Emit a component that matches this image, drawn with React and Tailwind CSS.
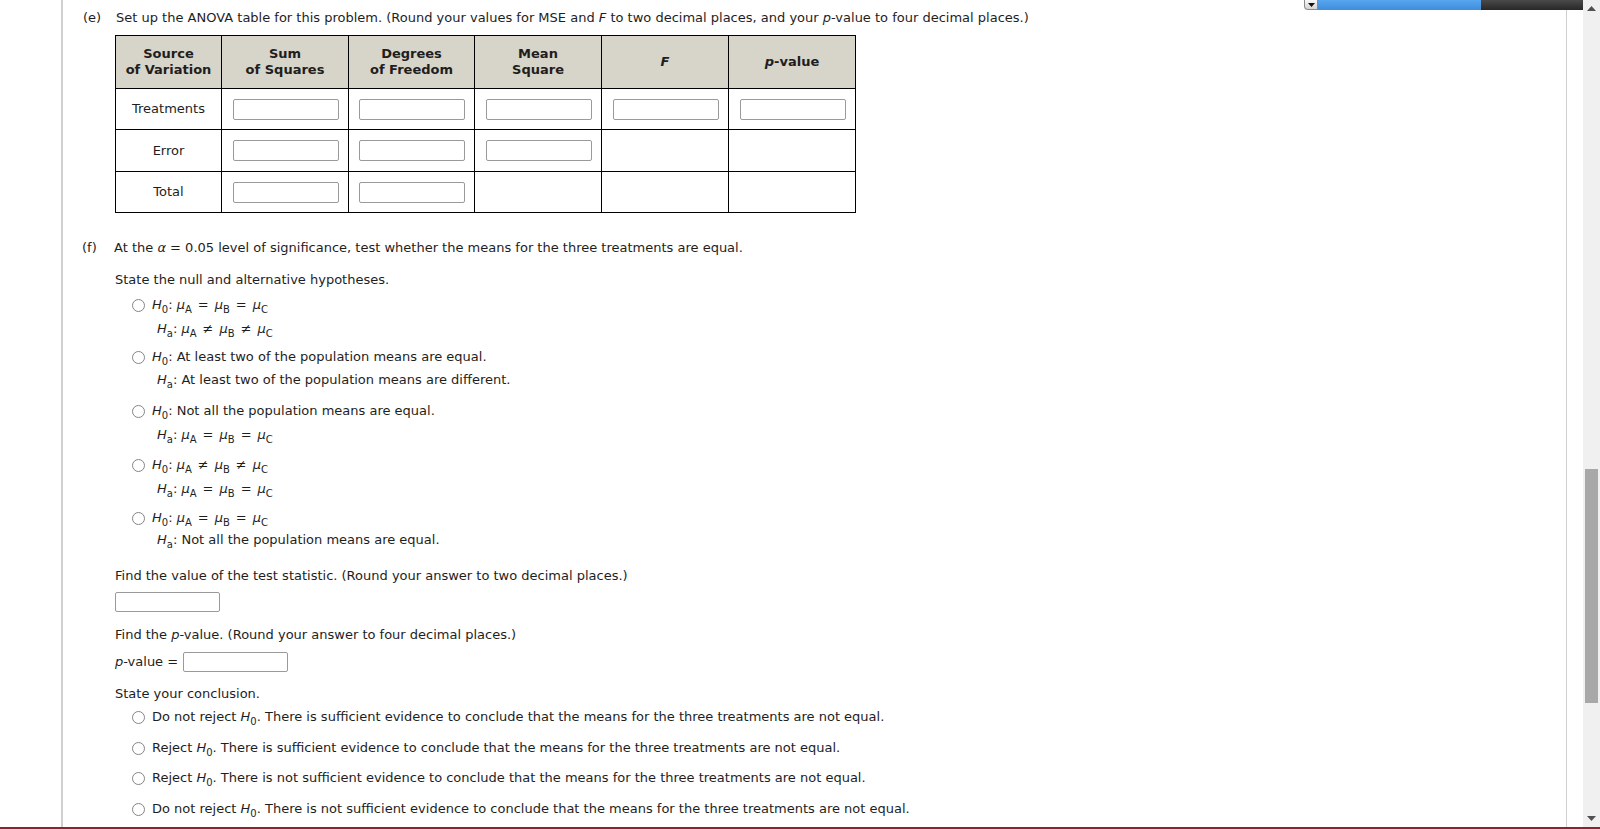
import React from "react";

const Radio = () => (
  <span className="inline-block w-[13px] h-[13px] rounded-full border border-[#858585] bg-white shrink-0" />
);

const Sub = ({ children }) => (
  <sub className="text-[10px] relative top-[4px] not-italic">{children}</sub>
);

const H = ({ s }) => (
  <span>
    <i>H</i>
    <Sub>{s}</Sub>
  </span>
);

const Mu = ({ s }) => (
  <span>
    <i>μ</i>
    <Sub>{s}</Sub>
  </span>
);

const Eq = ({ ne }) => (
  <span className="mx-[6px]">{ne ? "≠" : "="}</span>
);

const Means = ({ ne }) => (
  <span>
    <Mu s="A" />
    <Eq ne={ne} />
    <Mu s="B" />
    <Eq ne={ne} />
    <Mu s="C" />
  </span>
);

const Input = ({ w = "w-[106px]", h = "h-[21px]" }) => (
  <input
    readOnly
    className={`${w} ${h} border border-[#9a9a9a] rounded-[2px] bg-white outline-none`}
  />
);

const Line = ({ mt, children, className = "" }) => (
  <div className={`flex items-center h-[20px] leading-[20px] whitespace-nowrap ${mt} ${className}`}>
    {children}
  </div>
);

const OptTop = ({ mt, children }) => (
  <Line mt={mt} className="pl-[17px]">
    <Radio />
    <span className="ml-[7px]">{children}</span>
  </Line>
);

const OptBottom = ({ mt, children }) => (
  <Line mt={mt} className="pl-[42px]">
    <span>{children}</span>
  </Line>
);

export default function App() {
  const th = "border border-black bg-[#d7d4c9] font-bold text-center align-middle leading-[16px] p-0";
  const td = "border border-black text-center align-middle p-0";
  return (
    <div className="w-[1600px] h-[829px] flex flex-col overflow-hidden bg-white text-[13px] text-[#1e1e1e] font-['DejaVu_Sans',sans-serif] relative">
      <div className="flex h-[827px]">
        <div className="w-[61px] shrink-0" />
        <div className="w-[1506px] shrink-0 border-l-2 border-r border-[#d0d0d0] pl-[20px] pt-[8px]">
          {/* (e) */}
          <Line mt="">
            <span className="w-[33px]">(e)</span>
            <span>
              Set up the ANOVA table for this problem. (Round your values for MSE and <i>F</i> to two decimal places, and your <i>p</i>-value to four decimal places.)
            </span>
          </Line>

          <table className="mt-[7px] ml-[32px] border-collapse table-fixed w-[740px]">
            <colgroup>
              <col className="w-[106px]" />
              <col className="w-[127px]" />
              <col className="w-[126px]" />
              <col className="w-[127px]" />
              <col className="w-[127px]" />
              <col className="w-[127px]" />
            </colgroup>
            <thead>
              <tr className="h-[53px]">
                <th className={th}>Source<br />of Variation</th>
                <th className={th}>Sum<br />of Squares</th>
                <th className={th}>Degrees<br />of Freedom</th>
                <th className={th}>Mean<br />Square</th>
                <th className={th}><i>F</i></th>
                <th className={th}><i>p</i>-value</th>
              </tr>
            </thead>
            <tbody>
              <tr className="h-[41px]">
                <td className={td}>Treatments</td>
                <td className={td}><div className="flex justify-center pl-[1px]"><Input /></div></td>
                <td className={td}><div className="flex justify-center pl-[1px]"><Input /></div></td>
                <td className={td}><div className="flex justify-center pl-[1px]"><Input /></div></td>
                <td className={td}><div className="flex justify-center pl-[1px]"><Input /></div></td>
                <td className={td}><div className="flex justify-center pl-[1px]"><Input /></div></td>
              </tr>
              <tr className="h-[42px]">
                <td className={td}>Error</td>
                <td className={td}><div className="flex justify-center pl-[1px]"><Input /></div></td>
                <td className={td}><div className="flex justify-center pl-[1px]"><Input /></div></td>
                <td className={td}><div className="flex justify-center pl-[1px]"><Input /></div></td>
                <td className={td}></td>
                <td className={td}></td>
              </tr>
              <tr className="h-[41px]">
                <td className={td}>Total</td>
                <td className={td}><div className="flex justify-center pl-[1px]"><Input /></div></td>
                <td className={td}><div className="flex justify-center pl-[1px]"><Input /></div></td>
                <td className={td}></td>
                <td className={td}></td>
                <td className={td}></td>
              </tr>
            </tbody>
          </table>

          {/* (f) */}
          <Line mt="mt-[25px]">
            <span className="w-[32px] -ml-[1px]">(f)</span>
            <span>
              At the <i>α</i> = 0.05 level of significance, test whether the means for the three treatments are equal.
            </span>
          </Line>

          <div className="ml-[32px]">
            <Line mt="mt-[12px]">State the null and alternative hypotheses.</Line>

            <OptTop mt="mt-[5px]"><H s="0" />: <Means /></OptTop>
            <OptBottom mt="mt-[4px]"><H s="a" />: <Means ne /></OptBottom>

            <OptTop mt="mt-[8px]"><H s="0" />: At least two of the population means are equal.</OptTop>
            <OptBottom mt="mt-[3px]"><H s="a" />: At least two of the population means are different.</OptBottom>

            <OptTop mt="mt-[11px]"><H s="0" />: Not all the population means are equal.</OptTop>
            <OptBottom mt="mt-[4px]"><H s="a" />: <Means /></OptBottom>

            <OptTop mt="mt-[10px]"><H s="0" />: <Means ne /></OptTop>
            <OptBottom mt="mt-[4px]"><H s="a" />: <Means /></OptBottom>

            <OptTop mt="mt-[9px]"><H s="0" />: <Means /></OptTop>
            <OptBottom mt="mt-[2px]"><H s="a" />: Not all the population means are equal.</OptBottom>

            <Line mt="mt-[16px]">Find the value of the test statistic. (Round your answer to two decimal places.)</Line>
            <div className="mt-[6px] h-[20px] flex">
              <Input w="w-[105px]" h="h-[20px]" />
            </div>

            <Line mt="mt-[13px]">
              <span>Find the <i>p</i>-value. (Round your answer to four decimal places.)</span>
            </Line>
            <Line mt="mt-[7px]">
              <span className="w-[68px]"><i>p</i>-value =</span>
              <Input w="w-[105px]" h="h-[20px]" />
            </Line>

            <Line mt="mt-[12px]">State your conclusion.</Line>
            <OptTop mt="mt-[3px]">Do not reject <H s="0" />. There is sufficient evidence to conclude that the means for the three treatments are not equal.</OptTop>
            <OptTop mt="mt-[11px]">Reject <H s="0" />. There is sufficient evidence to conclude that the means for the three treatments are not equal.</OptTop>
            <OptTop mt="mt-[10px]">Reject <H s="0" />. There is not sufficient evidence to conclude that the means for the three treatments are not equal.</OptTop>
            <OptTop mt="mt-[11px]">Do not reject <H s="0" />. There is not sufficient evidence to conclude that the means for the three treatments are not equal.</OptTop>
          </div>
        </div>
        <div className="flex-1" />
        {/* scrollbar */}
        <div className="w-[17px] shrink-0 bg-[#f0f0f0] flex flex-col">
          <div className="h-[17px] flex items-center justify-center">
            <svg width="9" height="5" viewBox="0 0 9 5"><polygon points="4.5,0 9,5 0,5" fill="#505050" /></svg>
          </div>
          <div className="mt-[452px] ml-[2px] w-[13px] h-[234px] bg-[#a8a8a8]" />
          <div className="flex-1" />
          <div className="h-[17px] flex items-center justify-center">
            <svg width="9" height="5" viewBox="0 0 9 5"><polygon points="0,0 9,0 4.5,5" fill="#505050" /></svg>
          </div>
        </div>
      </div>
      <div className="h-[2px] bg-[#8a2430]" />

      {/* top-right mini toolbar */}
      <div className="absolute top-0 left-[1304px] h-[10px] flex">
        <div className="w-[14px] h-[10px] bg-gradient-to-b from-[#f8f8f8] to-[#d4d4d4] border border-[#8a8a8a] border-t-0 rounded-bl-[4px] flex items-center justify-center">
          <svg width="7" height="4" viewBox="0 0 7 4"><polygon points="0,0 7,0 3.5,4" fill="#111" /></svg>
        </div>
        <div className="w-[163px] h-[10px] bg-gradient-to-b from-[#58a5ef] to-[#3f8ddb]" />
        <div className="w-[102px] h-[10px] bg-gradient-to-b from-[#4a4a4a] to-[#282828]" />
      </div>
    </div>
  );
}
